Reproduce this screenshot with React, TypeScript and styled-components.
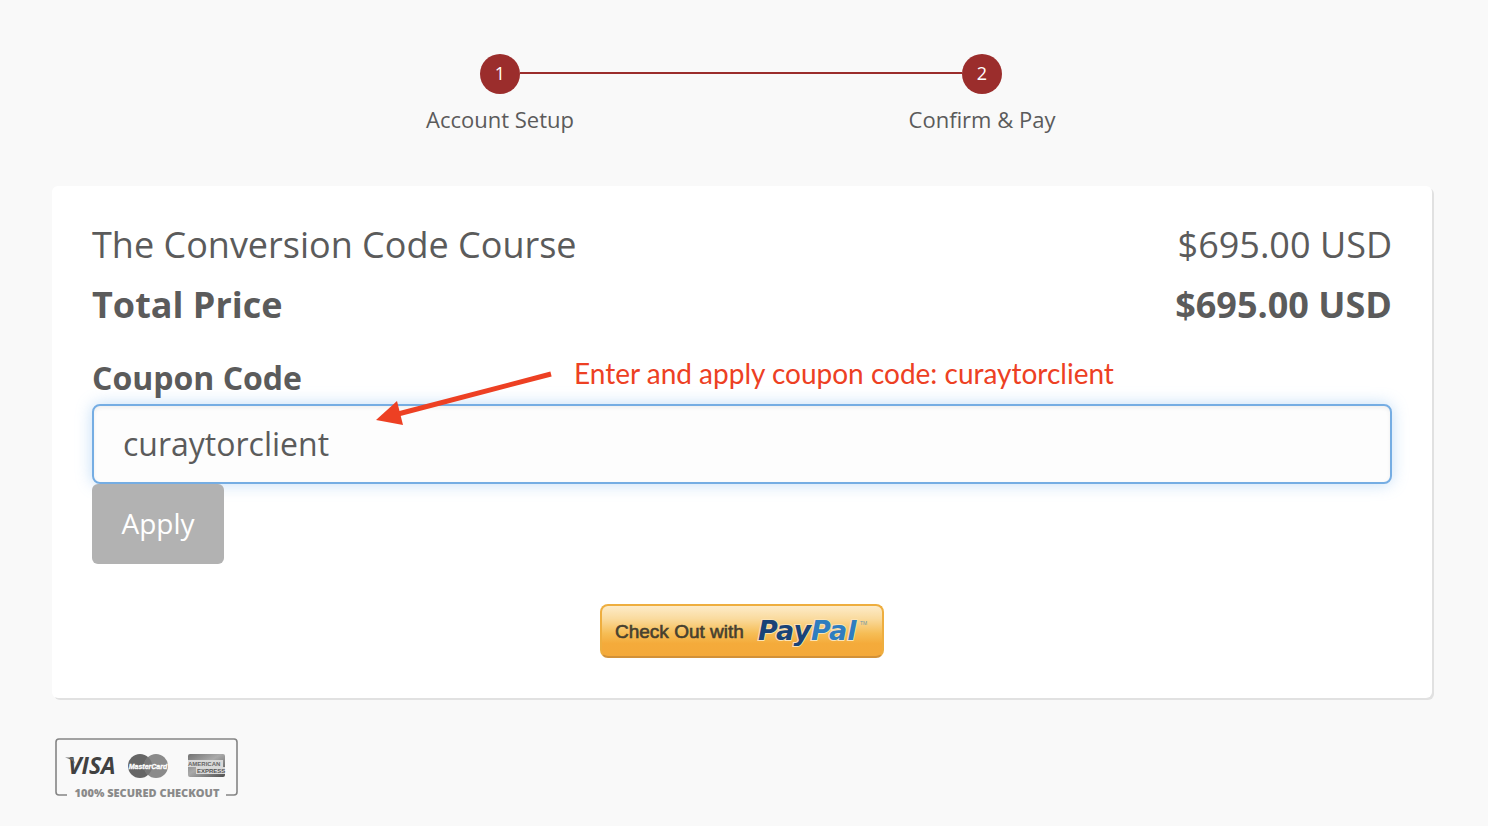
import React, { useState } from "react";
import styled, { createGlobalStyle } from "styled-components";

const colors = {
  page: "#f9f9f9",
  text: "#5b5b5b",
  brand: "#9b2d2c",
  focus: "#75ade3",
  note: "#ed4023",
};

const GlobalStyle = createGlobalStyle`
  *, *::before, *::after { box-sizing: border-box; }
  body {
    margin: 0;
    background: ${colors.page};
    color: ${colors.text};
    font-family: "Open Sans", sans-serif;
  }
`;

const Steps = styled.ol`
  display: flex;
  justify-content: center;
  margin: 0;
  padding: 54px 56px 0 50px;
  list-style: none;
`;

const Step = styled.li`
  flex: 0 1 482px;
  text-align: center;
`;

const StepTrack = styled.div`
  display: flex;
  align-items: center;
`;

const StepLine = styled.span<{ $visible: boolean }>`
  flex: 1;
  height: 2px;
  margin-bottom: 2px;
  background: ${(p) => (p.$visible ? colors.brand : "transparent")};
`;

const StepNumber = styled.span`
  width: 40px;
  height: 40px;
  border-radius: 50%;
  background: ${colors.brand};
  color: #fff;
  font-size: 18px;
  line-height: 38px;
`;

const StepLabel = styled.div`
  margin-top: 9px;
  font-size: 22px;
  line-height: 32px;
`;

const Main = styled.main`
  padding: 51px 56px 28px 52px;
`;

const Card = styled.form`
  padding: 29px 40px 40px;
  border-radius: 6px;
  background: #fff;
  box-shadow: 2px 2px 0 #e1e1e1;
`;

const PriceRow = styled.div<{ $total?: boolean }>`
  display: flex;
  justify-content: space-between;
  font-size: 36px;
  line-height: 60px;
  font-weight: ${(p) => (p.$total ? 700 : 400)};
`;

const CouponGroup = styled.div`
  position: relative;
  margin-top: 21px;
`;

const CouponLabel = styled.label`
  display: block;
  margin-bottom: 4px;
  font-size: 32px;
  line-height: 44px;
  font-weight: 700;
`;

const CouponInput = styled.input`
  display: block;
  width: 100%;
  height: 80px;
  padding: 0 29px 2px;
  border: 2px solid ${colors.focus};
  border-radius: 8px;
  outline: none;
  background: #fdfdfd;
  box-shadow: inset 0 2px 4px rgba(0, 0, 0, 0.06), 0 0 16px rgba(102, 170, 235, 0.4);
  color: ${colors.text};
  font: 32px "Open Sans", sans-serif;
`;

const ApplyButton = styled.button`
  position: relative;
  display: block;
  width: 132px;
  height: 80px;
  padding: 0 0 2px;
  border: 0;
  border-radius: 6px;
  background: #b2b2b2;
  color: #fff;
  font: 28px "Open Sans", sans-serif;
`;

const Annotation = styled.div`
  position: absolute;
  top: 0;
  left: 284px;
  display: flex;
  align-items: flex-start;
  gap: 22px;
  pointer-events: none;
  color: ${colors.note};
  font-family: Lato, sans-serif;
  font-size: 28px;
  line-height: 34px;
  white-space: nowrap;
`;

const Arrow = styled.svg`
  display: block;
  width: 176px;
  height: 72px;
`;

const PayPalButton = styled.button`
  display: flex;
  align-items: center;
  justify-content: center;
  width: 284px;
  height: 54px;
  margin: 40px auto 0;
  padding: 0;
  border: 2px solid #eeae3f;
  border-bottom-color: #d29138;
  border-radius: 8px;
  background: linear-gradient(#fdebc8 0%, #fadb9f 25%, #f6bd55 55%, #f4ab3b 75%, #f4a93a 100%);
`;

const PayPalArt = styled.svg`
  display: block;
  width: 280px;
  height: 50px;
`;

const SecureBadge = styled.svg`
  display: block;
  width: 184px;
  height: 62px;
  margin: 39px 0 0 3px;
`;

function CardBrands() {
  return (
    <SecureBadge viewBox="0 0 184 62" role="img" aria-label="Visa, MasterCard, American Express. 100% secured checkout">
      <defs>
        <linearGradient id="amex" x1="0" y1="0" x2="1" y2="1">
          <stop offset="0" stopColor="#737373" />
          <stop offset="0.45" stopColor="#aaa" />
          <stop offset="1" stopColor="#505050" />
        </linearGradient>
      </defs>
      <path d="M12 58H4Q1 58 1 55V5Q1 2 4 2H179Q182 2 182 5V55Q182 58 179 58H171" fill="none" stroke="#858585" strokeWidth="1.6" />
      <text x="13" y="37" fontFamily="Open Sans, sans-serif" fontSize="23" fontWeight="700" fontStyle="italic" fill="#414141">VISA</text>
      <path d="M10 20.5H18L20 27Q17 22 10 20.5Z" fill="#666" />
      <circle cx="85" cy="29" r="12" fill="#666" />
      <circle cx="101" cy="29" r="12" fill="#8b8b8b" />
      <path d="M93 20A12 12 0 0 1 93 38A12 12 0 0 1 93 20Z" fill="#777" />
      <text x="93" y="32" textAnchor="middle" fontFamily="Liberation Sans, sans-serif" fontSize="7" fontWeight="700" fontStyle="italic" fill="#fff" stroke="#fff" strokeWidth="0.3">MasterCard</text>
      <rect x="133" y="17" width="37" height="23" rx="2" fill="url(#amex)" />
      <path d="M133 23H168V30H133ZM141 30H170V37H141Z" fill="#d9d9d9" />
      <text x="133" y="29" fontFamily="Liberation Sans, sans-serif" fontSize="6" fontWeight="700" fill="#666">AMERICAN</text>
      <text x="142" y="36" fontFamily="Liberation Sans, sans-serif" fontSize="6" fontWeight="700" fill="#555">EXPRESS</text>
      <text x="92" y="60" textAnchor="middle" fontFamily="Open Sans, sans-serif" fontSize="11" fontWeight="800" fill="#8a8a8a">100% SECURED CHECKOUT</text>
    </SecureBadge>
  );
}

const steps = ["Account Setup", "Confirm & Pay"];

export default function App() {
  const [coupon, setCoupon] = useState("curaytorclient");

  return (
    <>
      <GlobalStyle />
      <Steps>
        {steps.map((label, i) => (
          <Step key={label}>
            <StepTrack>
              <StepLine $visible={i > 0} />
              <StepNumber>{i + 1}</StepNumber>
              <StepLine $visible={i < steps.length - 1} />
            </StepTrack>
            <StepLabel>{label}</StepLabel>
          </Step>
        ))}
      </Steps>
      <Main>
        <Card onSubmit={(e) => e.preventDefault()}>
          <PriceRow>
            <span>The Conversion Code Course</span>
            <span>$695.00 USD</span>
          </PriceRow>
          <PriceRow $total>
            <span>Total Price</span>
            <span>$695.00 USD</span>
          </PriceRow>
          <CouponGroup>
            <CouponLabel htmlFor="coupon">Coupon Code</CouponLabel>
            <CouponInput id="coupon" type="text" value={coupon} onChange={(e) => setCoupon(e.target.value)} />
            <ApplyButton type="button">Apply</ApplyButton>
            <Annotation>
              <Arrow viewBox="0 0 176 72" aria-hidden="true">
                <path d="M175 18L22 58" stroke={colors.note} strokeWidth="5" />
                <path d="M0 64L21 45L27 69Z" fill={colors.note} />
              </Arrow>
              <span>Enter and apply coupon code: curaytorclient</span>
            </Annotation>
          </CouponGroup>
          <PayPalButton type="submit" aria-label="Check Out with PayPal">
            <PayPalArt viewBox="0 0 280 50">
              <text x="13" y="32" fontFamily="Liberation Sans, sans-serif" fontSize="19" fill="#47402f" stroke="#47402f" strokeWidth="0.6">Check Out with</text>
              <text x="156" y="34" fontFamily="DejaVu Sans, sans-serif" fontSize="27" fontWeight="700" fontStyle="italic" stroke="#fbe3b5" strokeWidth="2" paintOrder="stroke">
                <tspan fill="#1a4377">Pay</tspan>
                <tspan fill="#2f7dbf">Pal</tspan>
              </text>
              <text x="258" y="19" fontFamily="Liberation Sans, sans-serif" fontSize="5" fill="#6f97a5">TM</text>
            </PayPalArt>
          </PayPalButton>
        </Card>
        <CardBrands />
      </Main>
    </>
  );
}
